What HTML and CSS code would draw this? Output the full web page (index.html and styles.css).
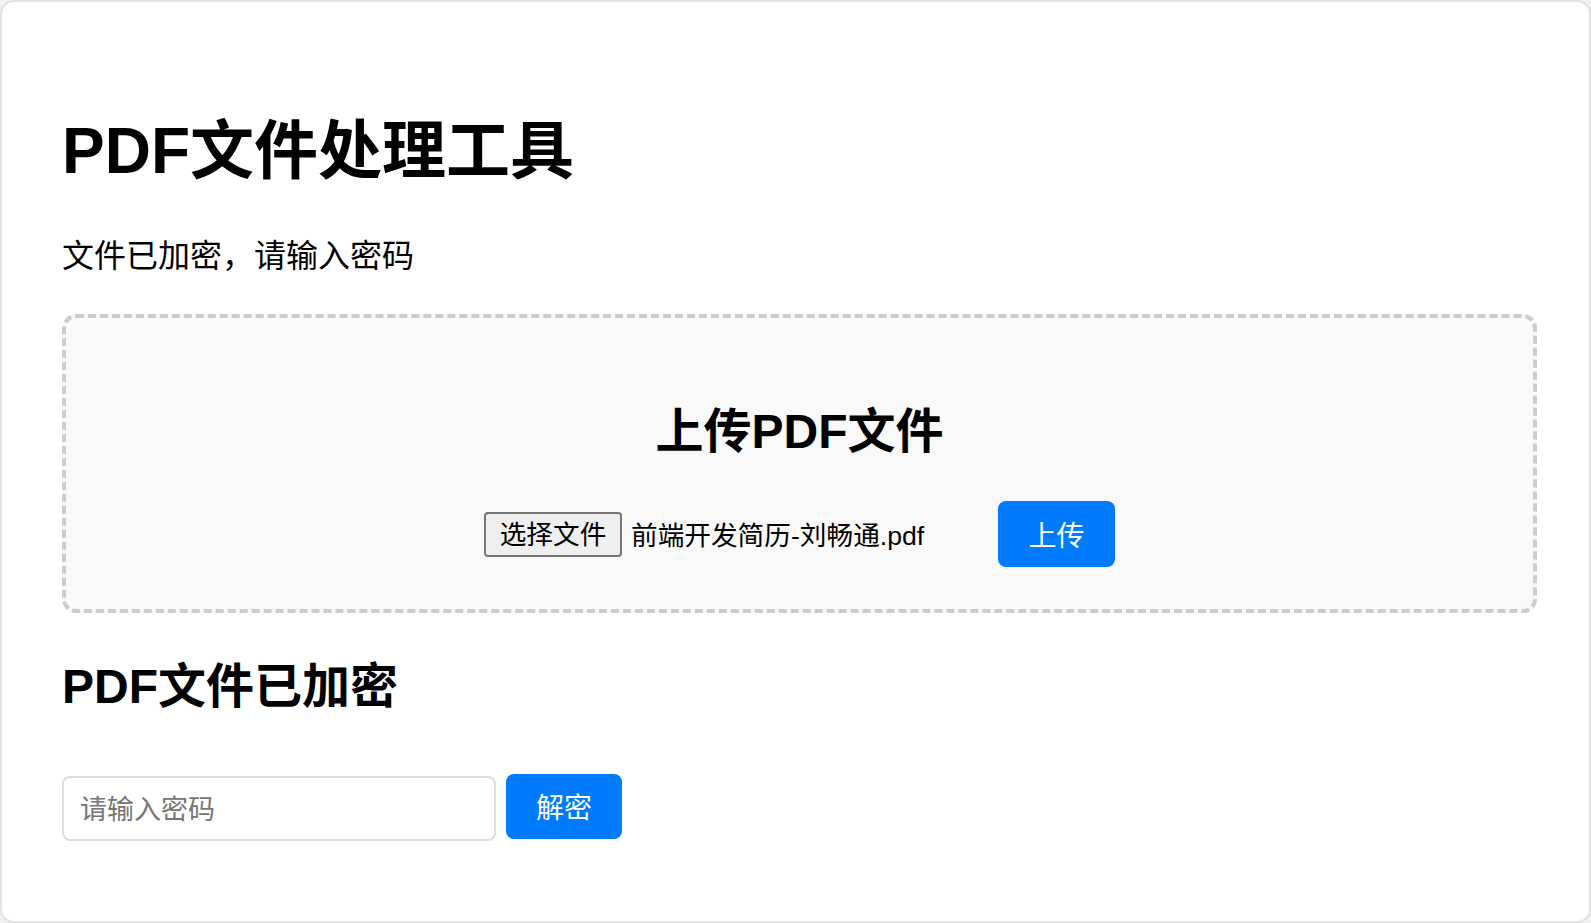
FILE: index.html
```html
<!DOCTYPE html>
<html lang="zh-CN">
<head>
<meta charset="utf-8">
<title>PDF文件处理工具</title>
<link rel="stylesheet" href="styles.css">
</head>
<body>
<main class="card">
  <h1 class="title">PDF文件处理工具</h1>
  <p class="status">文件已加密，请输入密码</p>

  <section class="upload-box">
    <h2 class="upload-title">上传PDF文件</h2>
    <div class="upload-row">
      <div class="file-input">
        <button class="file-btn" type="button">选择文件</button>
        <span class="file-name">前端开发简历-刘畅通.pdf</span>
      </div>
      <button class="primary-btn upload-btn" type="button">上传</button>
    </div>
  </section>

  <h2 class="section-title">PDF文件已加密</h2>
  <div class="password-row">
    <input class="password-input" type="password" placeholder="请输入密码">
    <button class="primary-btn decrypt-btn" type="button">解密</button>
  </div>
</main>
</body>
</html>
```

FILE: styles.css
```css
html, body {
  margin: 0;
  padding: 0;
  background: #f0f0f0;
}

body {
  font-family: "Liberation Sans", "Noto Sans CJK SC", sans-serif;
  color: #000;
}

.card {
  box-sizing: border-box;
  height: 923px;
  background: #ffffff;
  border: 2px solid #e2e2e2;
  border-radius: 14px;
  padding: 111px 52px 0 60px;
  overflow: hidden;
}

.title {
  margin: 0;
  font-size: 64px;
  line-height: 76px;
  font-weight: 700;
}

.status {
  margin: 47px 0 0;
  font-size: 32px;
  line-height: 40px;
}

.upload-box {
  margin-top: 38px;
  box-sizing: border-box;
  height: 299px;
  border: 4px dashed #cccccc;
  border-radius: 14px;
  background: #f9f9f9;
  padding: 85px 20px 0;
  text-align: center;
}

.upload-title {
  margin: 0 0 40px;
  font-size: 48px;
  line-height: 58px;
  font-weight: 700;
}

.upload-row {
  display: flex;
  justify-content: center;
  align-items: center;
}

.file-input {
  width: 504px;
  display: flex;
  align-items: center;
}

.file-btn {
  box-sizing: border-box;
  height: 45px;
  width: 138px;
  padding: 3px 0 0;
  background: #efefef;
  border: 2px solid #767676;
  border-radius: 4px;
  font-family: inherit;
  font-size: 26.67px;
  line-height: 1;
  color: #000;
}

.file-name {
  margin-left: 9px;
  padding-top: 4px;
  font-size: 26.67px;
  line-height: 32px;
  white-space: nowrap;
}

.primary-btn {
  box-sizing: border-box;
  height: 66px;
  width: 117px;
  padding: 5px 0 0;
  background: #007bff;
  color: #ffffff;
  border: none;
  border-radius: 8px;
  font-family: inherit;
  font-size: 28px;
  line-height: 1;
}

.upload-btn {
  margin-left: 10px;
}

.section-title {
  margin: 45px 0 0;
  font-size: 48px;
  line-height: 58px;
  font-weight: 700;
}

.password-row {
  margin-top: 58px;
  display: flex;
  align-items: flex-start;
}

.password-input {
  box-sizing: border-box;
  width: 434px;
  height: 65px;
  margin-top: 2px;
  padding: 3px 16px 0;
  border: 2px solid #dddddd;
  border-radius: 8px;
  font-family: inherit;
  font-size: 27px;
  color: #000;
  background: #fff;
  outline: none;
}

.password-input::placeholder {
  color: #757575;
}

.decrypt-btn {
  height: 65px;
  width: 116px;
  margin-left: 10px;
}
```
